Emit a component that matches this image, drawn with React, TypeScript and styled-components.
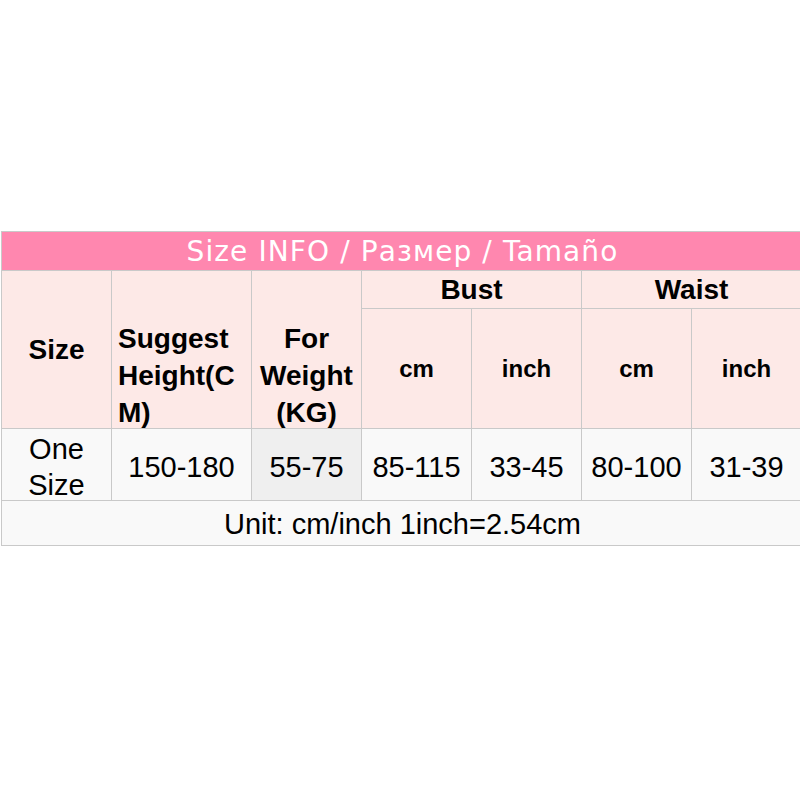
import React from "react";
import styled, { createGlobalStyle } from "styled-components";

const Global = createGlobalStyle`
  html, body {
    margin: 0;
    padding: 0;
    background: #ffffff;
    overflow: hidden;
  }
`;

const Page = styled.div`
  width: 800px;
  height: 800px;
  padding-top: 231px;
  padding-left: 1px;
  box-sizing: border-box;
  overflow: hidden;
`;

const Chart = styled.div`
  display: grid;
  grid-template-columns: 109px 139px repeat(5, 109px);
  grid-template-rows: 38px 37px 119px 71px 44px;
  gap: 1px;
  padding: 1px;
  width: max-content;
  background: #c9c9c9;
  font-family: "Liberation Sans", Arial, sans-serif;
  color: #000000;
`;

const Title = styled.div`
  grid-column: 1 / -1;
  background: #ff87af;
  color: #ffffff;
  font-family: "DejaVu Sans", Verdana, sans-serif;
  font-size: 28px;
  letter-spacing: 1.1px;
  display: flex;
  align-items: center;
  justify-content: center;
  padding-left: 2px;
`;

const Head = styled.div<{ $span?: number; $rows?: number; $size?: number; $top?: boolean; $left?: boolean }>`
  grid-column: span ${({ $span }) => $span ?? 1};
  grid-row: span ${({ $rows }) => $rows ?? 1};
  background: #fde9e7;
  font-weight: 700;
  font-size: ${({ $size }) => $size ?? 28}px;
  line-height: 37px;
  display: flex;
  flex-direction: column;
  justify-content: ${({ $top }) => ($top ? "flex-start" : "center")};
  align-items: ${({ $left }) => ($left ? "flex-start" : "center")};
  text-align: ${({ $left }) => ($left ? "left" : "center")};
  padding: ${({ $top }) => ($top ? "49px" : "0")} 0 0 ${({ $left }) => ($left ? "6px" : "0")};
  overflow-wrap: anywhere;
  box-sizing: border-box;
`;

const Cell = styled.div<{ $shade?: boolean }>`
  background: ${({ $shade }) => ($shade ? "#efefef" : "#f9f9f9")};
  font-size: 29px;
  line-height: 36px;
  display: flex;
  align-items: center;
  justify-content: center;
  text-align: center;
  padding-top: 5px;
  box-sizing: border-box;
`;

const Note = styled.div`
  grid-column: 1 / -1;
  background: #f9f9f9;
  font-size: 29px;
  display: flex;
  align-items: center;
  justify-content: center;
  padding-top: 3px;
  padding-left: 2px;
`;

const App: React.FC = () => {
  return (
    <Page>
      <Global />
      <Chart>
        <Title>Size INFO / Размер / Tamaño</Title>
        <Head $rows={2}>Size</Head>
        <Head $rows={2} $top $left>
          Suggest Height(CM)
        </Head>
        <Head $rows={2} $top>
          For Weight (KG)
        </Head>
        <Head $span={2}>Bust</Head>
        <Head $span={2}>Waist</Head>
        <Head $size={24}>cm</Head>
        <Head $size={24}>inch</Head>
        <Head $size={24}>cm</Head>
        <Head $size={24}>inch</Head>
        <Cell>
          One
          <br />
          Size
        </Cell>
        <Cell>150-180</Cell>
        <Cell $shade>55-75</Cell>
        <Cell>85-115</Cell>
        <Cell>33-45</Cell>
        <Cell>80-100</Cell>
        <Cell>31-39</Cell>
        <Note>Unit: cm/inch 1inch=2.54cm</Note>
      </Chart>
    </Page>
  );
};

export default App;
